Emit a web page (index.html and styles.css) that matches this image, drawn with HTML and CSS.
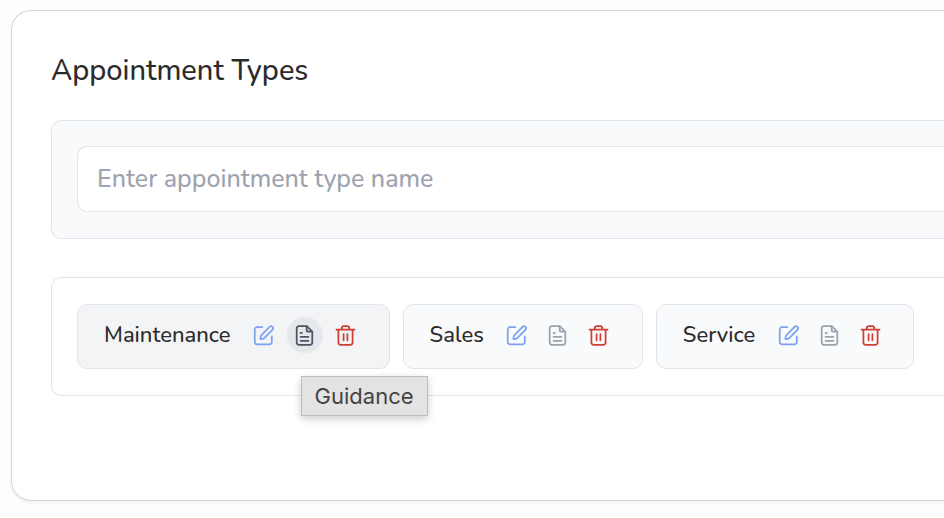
FILE: index.html
```html
<!DOCTYPE html>
<html lang="en">
<head>
<meta charset="utf-8">
<title>Appointment Types</title>
<link rel="stylesheet" href="styles.css">
</head>
<body>
<svg class="sprite" aria-hidden="true">
  <symbol id="edit" viewBox="0 0 24 24"><path d="M10.500 2.500H4.500A2.500 2.500 0 0 0 2 5v14.500A2.500 2.500 0 0 0 4.500 22h14.500a2.500 2.500 0 0 0 2.500-2.500V13"/><path d="M18.800 2.200a2.300 2.300 0 0 1 3.400 3.300L12.800 15q-1.300 1.300-4.300 1.200-.2-2.800 1-4.400z"/></symbol>
  <symbol id="note" viewBox="0 0 24 24"><path d="M14.500 1.300H5.600a2.500 2.500 0 0 0-2.500 2.500v16.400a2.500 2.500 0 0 0 2.500 2.500h12.800a2.500 2.500 0 0 0 2.500-2.500V7.700z"/><path d="M14.500 1.300v4.400a2 2 0 0 0 2 2h4.400M7.500 9H9M7.500 13.500h9M7.500 18h9"/></symbol>
  <symbol id="trash" viewBox="0 0 24 24"><path d="M1.700 5.300h20.600M3.900 5.300v14.900a2.500 2.500 0 0 0 2.500 2.500h11.200a2.500 2.500 0 0 0 2.500-2.500V5.300M7.700 5.300V3.800a2.500 2.500 0 0 1 2.500-2.500h3.600a2.500 2.500 0 0 1 2.500 2.500v1.500M9.800 10.500v7M14.200 10.500v7"/></symbol>
</svg>
<main class="card">
  <h1 class="title">Appointment Types</h1>
  <form class="panel panel-form">
    <input class="field" type="text" aria-label="Appointment type name" placeholder="Enter appointment type name">
  </form>
  <ul class="panel chips">
    <li class="chip chip-active">
      <span class="name">Maintenance</span>
      <div class="actions">
        <button class="action edit" type="button" aria-label="Edit"><svg><use href="#edit"/></svg></button>
        <button class="action note note-active" type="button" aria-describedby="tip" aria-label="Guidance"><svg><use href="#note"/></svg><span class="tip" id="tip" role="tooltip">Guidance</span></button>
        <button class="action trash" type="button" aria-label="Delete"><svg><use href="#trash"/></svg></button>
      </div>
    </li>
    <li class="chip">
      <span class="name">Sales</span>
      <div class="actions">
        <button class="action edit" type="button" aria-label="Edit"><svg><use href="#edit"/></svg></button>
        <button class="action note" type="button" aria-label="Guidance"><svg><use href="#note"/></svg></button>
        <button class="action trash" type="button" aria-label="Delete"><svg><use href="#trash"/></svg></button>
      </div>
    </li>
    <li class="chip">
      <span class="name">Service</span>
      <div class="actions">
        <button class="action edit" type="button" aria-label="Edit"><svg><use href="#edit"/></svg></button>
        <button class="action note" type="button" aria-label="Guidance"><svg><use href="#note"/></svg></button>
        <button class="action trash" type="button" aria-label="Delete"><svg><use href="#trash"/></svg></button>
      </div>
    </li>
  </ul>
</main>
</body>
</html>
```
FILE: styles.css
```css
* { box-sizing: border-box; }
body {
  margin: 0;
  background: #fefefe;
  color: #2b2b2b;
  font-family: Nunito, "Noto Sans", sans-serif;
}
.sprite { position: absolute; width: 0; height: 0; }
/* The card and its panels run flush to the right edge of the window. */
.card {
  margin: 10px 0 16px 11px;
  padding: 39px 0 104px 39px;
  border: 1px solid #d1d5db;
  border-right: 0;
  border-radius: 20px 0 0 20px;
  background: #fff;
  box-shadow: 0 2px 4px rgba(0, 0, 0, .05);
}
.title { margin: 0 0 28px; font-size: 29px; line-height: 42px; font-weight: 500; }
.panel {
  margin: 0;
  padding: 25px 0 26px 25px;
  border: 1px solid #e1e4ea;
  border-right: 0;
  border-radius: 10px 0 0 10px;
}
.panel-form { margin-bottom: 38px; background: #f9fafc; }
.field {
  display: block;
  width: 100%;
  height: 66px;
  padding: 0 19px;
  border: 1px solid #e1e4ea;
  border-right: 0;
  border-radius: 10px 0 0 10px;
  background: #fff;
  color: inherit;
  font: 500 25px/32px Nunito, "Noto Sans", sans-serif;
}
.field::placeholder { color: #9ca3af; opacity: 1; }
.chips { display: flex; flex-wrap: wrap; gap: 13px; list-style: none; padding-top: 26px; }
.chip {
  display: flex;
  align-items: center;
  gap: 15px;
  height: 65px;
  padding: 0 25px 3px 26px;
  border: 1px solid #e1e4ea;
  border-radius: 10px;
  background: #f9fafc;
}
.chip-active { background: #f3f4f6; }
.name { font-size: 22px; line-height: 32px; font-weight: 500; }
.actions { display: flex; gap: 5px; }
.action {
  position: relative;
  display: grid;
  place-items: center;
  width: 36px;
  height: 36px;
  padding: 0;
  border: 0;
  border-radius: 50%;
  background: none;
}
.action svg { width: 21px; height: 21px; fill: none; stroke: currentColor; stroke-width: 2; stroke-linecap: round; stroke-linejoin: round; }
.edit { color: #7da2f4; }
.note { color: #9ca3af; }
.note-active { background: #e5e7eb; color: #4b5563; }
.trash { color: #cf3d35; }
.tip {
  position: absolute;
  top: 59px;
  left: 14px;
  padding: 2px 13px;
  border: 1px solid #bdbdbd;
  background: #e3e3e3;
  color: #444;
  font: 400 22px/34px Inter, sans-serif;
  box-shadow: 0 3px 8px rgba(0, 0, 0, .2);
}
```
